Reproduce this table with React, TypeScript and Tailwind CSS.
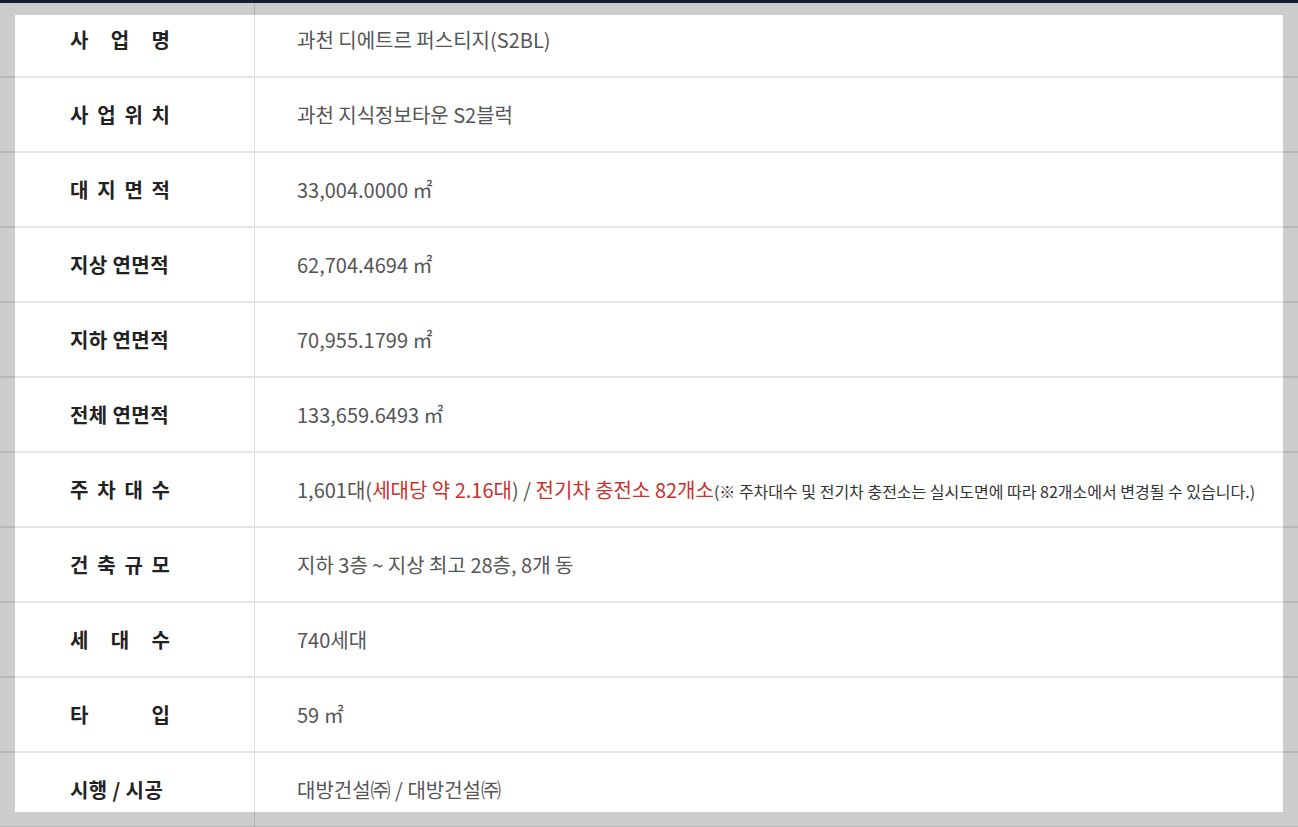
import React from "react";

type Row = {
  label: string | string[];
  value: React.ReactNode;
};

const rows: Row[] = [
  { label: ["사", "업", "명"], value: "과천 디에트르 퍼스티지(S2BL)" },
  { label: ["사", "업", "위", "치"], value: "과천 지식정보타운 S2블럭" },
  { label: ["대", "지", "면", "적"], value: "33,004.0000 ㎡" },
  { label: "지상 연면적", value: "62,704.4694 ㎡" },
  { label: "지하 연면적", value: "70,955.1799 ㎡" },
  { label: "전체 연면적", value: "133,659.6493 ㎡" },
  {
    label: ["주", "차", "대", "수"],
    value: (
      <>
        1,601대(<span className="text-[#c8312c]">세대당 약 2.16대</span>) /{" "}
        <span className="text-[#c8312c]">전기차 충전소 82개소</span>
        <span className="text-[16px] tracking-[0px] text-[#333]">
          (※ 주차대수 및 전기차 충전소는 실시도면에 따라 82개소에서 변경될 수 있습니다.)
        </span>
      </>
    ),
  },
  { label: ["건", "축", "규", "모"], value: "지하 3층 ~ 지상 최고 28층, 8개 동" },
  { label: ["세", "대", "수"], value: "740세대" },
  { label: ["타", "입"], value: "59 ㎡" },
  { label: "시행 / 시공", value: "대방건설㈜ / 대방건설㈜" },
];

const Label = ({ label }: { label: string | string[] }) => {
  if (Array.isArray(label)) {
    return (
      <div className="flex w-[100px] justify-between">
        {label.map((ch, i) => (
          <span key={i}>{ch}</span>
        ))}
      </div>
    );
  }
  return <div className="tracking-[0.4px]">{label}</div>;
};

const App = () => {
  return (
    <div
      className="relative h-[827px] w-[1298px] overflow-hidden bg-white"
      style={{ fontFamily: '"Noto Sans CJK KR", "Noto Sans", sans-serif' }}
    >
      <div className="border-t-[3px] border-[#1c2545]">
        {rows.map((row, i) => (
          <div key={i} className="flex h-[75px] border-b-2 border-[#e5e5e5]">
            <div className="flex w-[255px] flex-shrink-0 items-center border-r border-[#dedede] pl-[70px] text-[20px] font-bold text-[#222]">
              <Label label={row.label} />
            </div>
            <div className="flex items-center pl-[42px] text-[20px] tracking-[0px] text-[#555]">
              <div>{row.value}</div>
            </div>
          </div>
        ))}
      </div>
      <div className="pointer-events-none absolute top-[15px] right-[15px] bottom-[15px] left-[15px] shadow-[0_0_0_9999px_rgba(0,0,0,0.2)]" />
    </div>
  );
};

export default App;
